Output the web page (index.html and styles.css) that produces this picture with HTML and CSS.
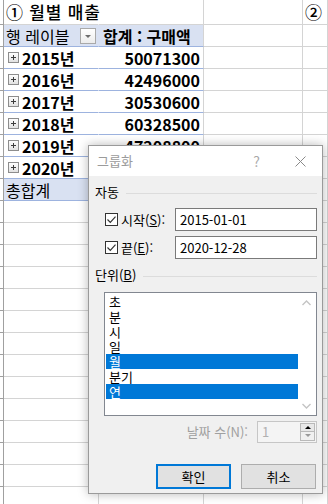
FILE: index.html
```html
<!DOCTYPE html>
<html lang="ko">

<head>
    <meta charset="UTF-8">
    <meta name="viewport" content="width=device-width, initial-scale=1.0">
    <title>그룹화</title>
    <link rel="stylesheet" href="styles.css">
</head>

<body>
    <div class="sheet">
        <div class="row first">
            <i></i><div class="cell open caption">① 월별 매출</div><i></i><i></i><div class="cell caption">② 지역별 매출</div>
        </div>
        <div class="row pv head">
            <i></i><div class="cell open">행 레이블<span class="drop"></span></div><div class="cell bold hd">합계 : 구매액</div><i></i><i></i>
        </div>
        <div class="row pv">
            <i></i><div class="cell open bold yr"><span class="plus"></span>2015년</div><div class="cell bold num">50071300</div><i></i><i></i>
        </div>
        <div class="row pv">
            <i></i><div class="cell open bold yr"><span class="plus"></span>2016년</div><div class="cell bold num">42496000</div><i></i><i></i>
        </div>
        <div class="row pv">
            <i></i><div class="cell open bold yr"><span class="plus"></span>2017년</div><div class="cell bold num">30530600</div><i></i><i></i>
        </div>
        <div class="row pv">
            <i></i><div class="cell open bold yr"><span class="plus"></span>2018년</div><div class="cell bold num">60328500</div><i></i><i></i>
        </div>
        <div class="row pv">
            <i></i><div class="cell open bold yr"><span class="plus"></span>2019년</div><div class="cell bold num">47208800</div><i></i><i></i>
        </div>
        <div class="row pv">
            <i></i><div class="cell open bold yr"><span class="plus"></span>2020년</div><div class="cell bold num"></div><i></i><i></i>
        </div>
        <div class="row pv head">
            <i></i><div class="cell open">총합계</div><div class="cell bold num"></div><i></i><i></i>
        </div>
        <div class="row"><i></i><i></i><i></i><i></i><i></i></div>
        <div class="row"><i></i><i></i><i></i><i></i><i></i></div>
        <div class="row"><i></i><i></i><i></i><i></i><i></i></div>
        <div class="row"><i></i><i></i><i></i><i></i><i></i></div>
        <div class="row"><i></i><i></i><i></i><i></i><i></i></div>
        <div class="row"><i></i><i></i><i></i><i></i><i></i></div>
        <div class="row"><i></i><i></i><i></i><i></i><i></i></div>
        <div class="row"><i></i><i></i><i></i><i></i><i></i></div>
        <div class="row"><i></i><i></i><i></i><i></i><i></i></div>
        <div class="row"><i></i><i></i><i></i><i></i><i></i></div>
        <div class="row"><i></i><i></i><i></i><i></i><i></i></div>
        <div class="row"><i></i><i></i><i></i><i></i><i></i></div>
        <div class="row"><i></i><i></i><i></i><i></i><i></i></div>
        <div class="row"><i></i><i></i><i></i><i></i><i></i></div>
    </div>

    <div class="dialog">
        <div class="titlebar">
            <span class="title">그룹화</span>
            <span class="help">?</span>
            <svg class="close" width="11" height="11" viewBox="0 0 11 11"><path d="M0.5 0.5l10 10M10.5 0.5l-10 10" stroke="#8a8a8a" stroke-width="1" fill="none"/></svg>
        </div>
        <div class="dbody">
            <div class="group"><span>자동</span><i class="rule"></i></div>

            <div class="field">
                <svg class="check" width="13" height="13" viewBox="0 0 13 13"><rect x="0.5" y="0.5" width="12" height="12" fill="#fff" stroke="#333"/><path d="M2.5 6.5l2.8 2.8 5.2-5.6" fill="none" stroke="#333" stroke-width="1.2"/></svg>
                <span class="lbl">시작(<u>S</u>):</span>
                <div class="textbox">2015-01-01</div>
            </div>
            <div class="field second">
                <svg class="check" width="13" height="13" viewBox="0 0 13 13"><rect x="0.5" y="0.5" width="12" height="12" fill="#fff" stroke="#333"/><path d="M2.5 6.5l2.8 2.8 5.2-5.6" fill="none" stroke="#333" stroke-width="1.2"/></svg>
                <span class="lbl">끝(<u>E</u>):</span>
                <div class="textbox">2020-12-28</div>
            </div>

            <div class="group unit"><span>단위(<u>B</u>)</span><i class="rule"></i></div>

            <div class="listbox">
                <div class="items">
                    <div class="item">초</div>
                    <div class="item">분</div>
                    <div class="item">시</div>
                    <div class="item">일</div>
                    <div class="item sel">월</div>
                    <div class="item">분기</div>
                    <div class="item sel">연</div>
                </div>
                <div class="scroll">
                    <svg width="9" height="6" viewBox="0 0 9 6"><path d="M0.5 5l4-4 4 4" fill="none" stroke="#c4c4c4" stroke-width="1.4"/></svg>
                    <svg width="9" height="6" viewBox="0 0 9 6"><path d="M0.5 1l4 4 4-4" fill="none" stroke="#c4c4c4" stroke-width="1.4"/></svg>
                </div>
            </div>

            <div class="spinrow">
                <span class="dis">날짜 수(N):</span>
                <div class="spin">
                    <span class="val">1</span>
                    <div class="arrows">
                        <span class="up"></span>
                        <span class="down"></span>
                    </div>
                </div>
            </div>

            <div class="buttons">
                <div class="btn ok">확인</div>
                <div class="btn">취소</div>
            </div>
        </div>
    </div>
</body>

</html>
```

FILE: styles.css
```css
* {
    box-sizing: border-box;
}

body {
    margin: 0;
    width: 328px;
    height: 504px;
    overflow: hidden;
    position: relative;
    background: #fff;
    font-family: "Noto Sans CJK KR", "Noto Sans", sans-serif;
}

/* 시트 */
.sheet {
    font-size: 16px;
    line-height: 20px;
    color: #000;
}

.row {
    display: grid;
    grid-template-columns: 4px 95px 105px 99px 1fr;
    height: 22px;
}

.row.first {
    height: 25px;
}

.row > * {
    border-right: 1px solid #d4d4d4;
    border-bottom: 1px solid #d4d4d4;
    min-width: 0;
}

.row > :first-child {
    border-right-color: #a0a0a0;
    border-bottom-color: #a0a0a0;
}

.cell {
    display: flex;
    align-items: center;
    padding: 0 2px;
    white-space: nowrap;
}

.cell.open {
    border-right-color: transparent;
}

.caption {
    font-size: 17px;
    letter-spacing: 0.8px;
    font-weight: 500;
}

.bold {
    font-weight: bold;
}

.pv .cell {
    border-bottom-color: #9db3df;
}

.head .cell {
    background: #d9e1f2;
}

.hd {
    padding-left: 4px;
}

.num {
    justify-content: flex-end;
    padding-right: 3px;
}

.yr {
    padding-left: 4px;
}

.drop {
    margin-left: auto;
    width: 16px;
    height: 16px;
    border: 1px solid #a9a9a9;
    background: linear-gradient(#ffffff, #ececec);
    position: relative;
}

.drop::after {
    content: "";
    position: absolute;
    left: 4px;
    top: 6px;
    border-left: 3px solid transparent;
    border-right: 3px solid transparent;
    border-top: 3px solid #6d6d6d;
}

.plus {
    width: 11px;
    height: 11px;
    margin-right: 3px;
    border: 1px solid #8d8d8d;
    background: linear-gradient(#fdfdfd, #e2e2e2);
    position: relative;
    flex: none;
}

.plus::before,
.plus::after {
    content: "";
    position: absolute;
    background: #3c3c3c;
}

.plus::before {
    left: 2px;
    top: 4px;
    width: 5px;
    height: 1px;
}

.plus::after {
    left: 4px;
    top: 2px;
    width: 1px;
    height: 5px;
}

/* 그룹화 대화상자 */
.dialog {
    position: absolute;
    left: 88px;
    top: 145px;
    width: 235px;
    height: 349px;
    border: 1px solid #9a9a9a;
    background: #f0f0f0;
    box-shadow: 0 0 10px rgba(0, 0, 0, 0.28);
    font-size: 13px;
    line-height: 16px;
    color: #000;
}

.titlebar {
    height: 30px;
    background: #fff;
    display: flex;
    align-items: center;
    padding: 0 16px 0 8px;
}

.title {
    color: #9b9b9b;
    flex: 1;
}

.help {
    color: #a8a8a8;
    font-size: 14px;
    margin-right: 35px;
}

.dbody {
    padding: 0 5px 0 6px;
}

.group {
    display: flex;
    align-items: center;
    margin-top: 8px;
}

.rule {
    flex: 1;
    height: 1px;
    background: #dcdcdc;
    margin-left: 7px;
    margin-top: 2px;
}

.field {
    display: flex;
    align-items: center;
    margin-top: 8px;
    padding-left: 10px;
}

.field.second {
    margin-top: 5px;
}

.check {
    flex: none;
}

.lbl {
    margin-left: 3px;
    flex: 1;
}

.textbox {
    width: 142px;
    height: 23px;
    border: 1px solid #7a7a7a;
    background: #fff;
    padding: 0 0 0 4px;
    line-height: 21px;
}

.listbox {
    margin: 9px 0 0 9px;
    height: 124px;
    border: 1px solid #828790;
    background: #fff;
    display: flex;
    padding: 1px;
}

.items {
    flex: 1;
}

.item {
    height: 15px;
    line-height: 15px;
    padding-left: 3px;
}

.item.sel {
    background: #0078d7;
    color: #fff;
}

.scroll {
    width: 17px;
    display: flex;
    flex-direction: column;
    justify-content: space-between;
    align-items: center;
    padding: 6px 0 5px;
}

.spinrow {
    display: flex;
    justify-content: flex-end;
    align-items: center;
    margin-top: 5px;
}

.dis {
    color: #a0a0a0;
    margin-right: 9px;
}

.spin {
    width: 60px;
    height: 22px;
    border: 1px solid #c6c6c6;
    background: #f4f4f4;
    display: flex;
    align-items: center;
    padding: 0 1px 0 4px;
}

.val {
    color: #b0b0b0;
    flex: 1;
}

.arrows {
    width: 15px;
    display: flex;
    flex-direction: column;
}

.arrows span {
    height: 9px;
    border: 1px solid #b9b9b9;
    background: #e8e8e8;
    position: relative;
}

.arrows .down {
    border-top: none;
    background: #f0f0f0;
}

.arrows span::after {
    content: "";
    position: absolute;
    left: 4px;
    border-left: 3px solid transparent;
    border-right: 3px solid transparent;
}

.arrows .up::after {
    top: 2px;
    border-bottom: 3px solid #000;
}

.arrows .down::after {
    top: 2px;
    border-top: 3px solid #9a9a9a;
}

.buttons {
    display: flex;
    justify-content: flex-end;
    gap: 10px;
    margin-top: 21px;
    padding-right: 1px;
}

.btn {
    width: 75px;
    height: 25px;
    border: 1px solid #adadad;
    background: #e1e1e1;
    text-align: center;
    line-height: 23px;
}

.btn.ok {
    border: 2px solid #0078d7;
    line-height: 21px;
}
```
